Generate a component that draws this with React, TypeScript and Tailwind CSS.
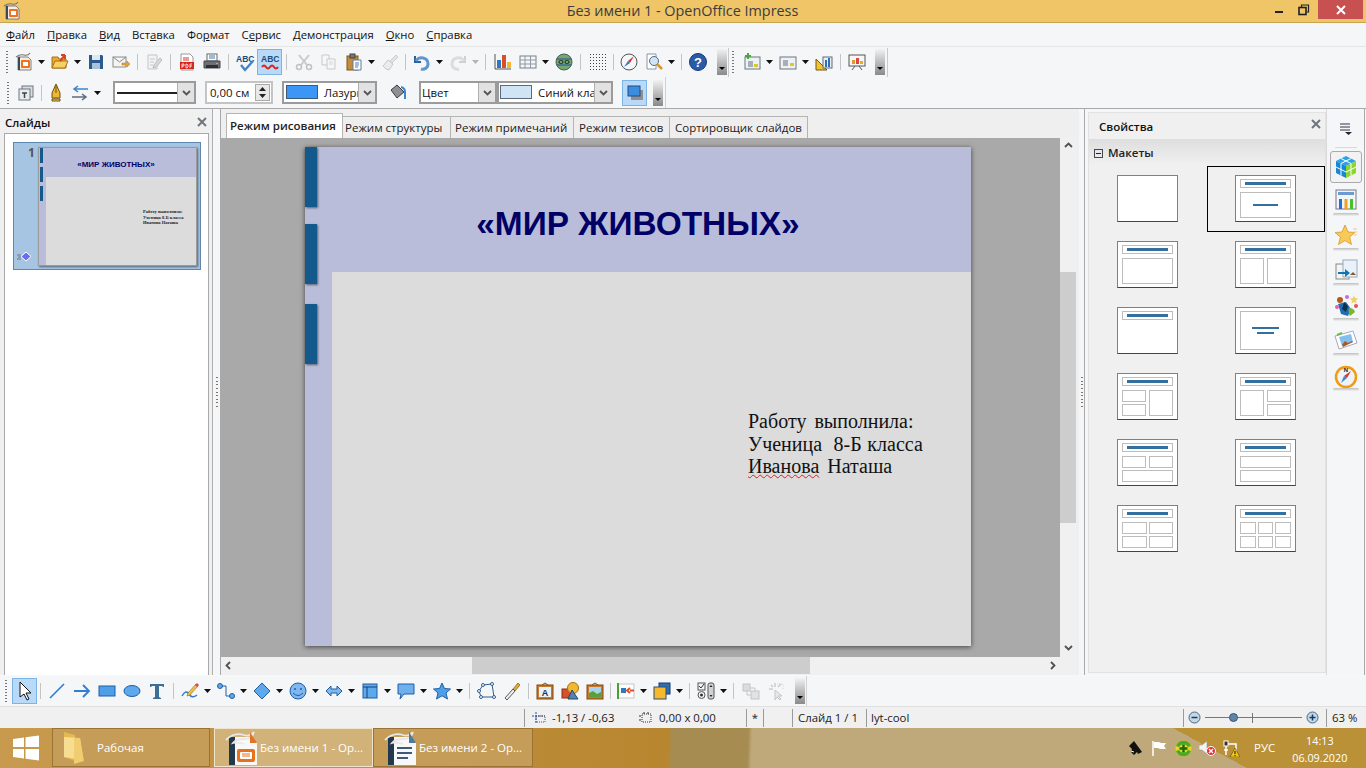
import React from "react";

const UI = "font-['Open_Sans','Noto_Sans',sans-serif]";

type P = { children: React.ReactNode; s?: number };
const V = ({ children, s = 20 }: P) => (
  <svg width={s} height={s} viewBox="0 0 20 20" className="block shrink-0">{children}</svg>
);

const Dd = () => (
  <div className="w-[11px] flex justify-center"><svg width="7" height="4" viewBox="0 0 7 4" className="block"><path d="M0 0h7L3.5 4z" fill="#111" /></svg></div>
);
const DdG = () => (
  <div className="w-[11px] flex justify-center"><svg width="7" height="4" viewBox="0 0 7 4" className="block"><path d="M0 0h7L3.5 4z" fill="#b5b5b5" /></svg></div>
);
const Sep = ({ w = "w-[8px]", h = "h-[16px]" }: { w?: string; h?: string }) => (
  <div className={`${w} flex justify-center`}><div className={`w-px ${h} bg-[#c4c4c4]`} /></div>
);
const Cell = ({ children, active }: { children: React.ReactNode; active?: boolean }) => (
  <div className={`w-[25px] h-[26px] flex items-center justify-center ${active ? "bg-[#b8d9f7] border border-[#7db4e6]" : ""}`}>{children}</div>
);
const Handle = ({ className = "" }: { className?: string }) => (
  <div className={`w-[2px] h-[22px] flex flex-col justify-between shrink-0 ${className}`}>
    {[0, 1, 2, 3, 4, 5, 6, 7].map((i) => <div key={i} className="w-[2px] h-px bg-[#777]" />)}
  </div>
);
const Overflow = ({ className = "" }: { className?: string }) => (
  <div className={`w-[10px] h-[26px] bg-gradient-to-b from-[#f2f2f2] to-[#8a8a8a] flex items-end justify-center pb-[5px] ${className}`}>
    <svg width="6" height="3" viewBox="0 0 6 3" className="block"><path d="M0 0h6L3 3z" fill="#000" /></svg>
  </div>
);

const IDoc = () => (
  <V><path d="M4 5h10l3 3v10H4z" fill="#f6eee2" stroke="#666" strokeWidth=".8" /><path d="M4 5h2v13H4z" fill="#3a4a58" /><path d="M2 5q4-3 8-2t6-2" fill="none" stroke="#777" strokeWidth="1.200" /><rect x="7" y="8" width="9" height="8" rx="1" fill="#ee7420" /><rect x="9" y="10" width="5" height="4" fill="#fff" /></V>
);
const IOpen = () => (
  <V><path d="M2 5h6l1 2h7v9H2z" fill="#e8a92f" stroke="#a8701a" /><path d="M2 16l3-7h13l-3 7z" fill="#f7d063" stroke="#a8701a" /><path d="M10 9l5-6M15 3h-4M15 3v4" stroke="#d2451e" strokeWidth="2" fill="none" /></V>
);
const ISave = () => (
  <V><path d="M3 3h13l1 1v13H3z" fill="#2c5a8c" /><rect x="6" y="3" width="8" height="5" fill="#dce7f3" /><rect x="6" y="11" width="8" height="6" fill="#a9c2dc" /></V>
);
const IMail = () => (
  <V><rect x="2" y="5" width="13" height="10" fill="#f4f4f4" stroke="#8a8a8a" /><path d="M2 5l6.5 5L15 5" fill="none" stroke="#8a8a8a" /><path d="M11 11h5V9l3 3-3 3v-2h-5z" fill="#f1a92a" stroke="#a8701a" strokeWidth=".5" /></V>
);
const IEdit = () => (
  <V><path d="M4 3h9v14H4z" fill="#f3f3f3" stroke="#c5c5c5" /><path d="M6 7h5M6 10h4M6 13h3" stroke="#c8c8c8" /><path d="M10 13l6-7 2 2-6 7-3 1z" fill="#dadada" stroke="#bbb" /></V>
);
const IPdf = () => (
  <V><path d="M4 2h9l3 3v13H4z" fill="#fff" stroke="#999" /><path d="M6 6h6M6 8h6" stroke="#d33" /><rect x="3" y="10" width="14" height="7" fill="#d8261c" /><path d="M5 12v4M5 12h2v2H5M9 12v4h1l1-1v-2l-1-1zM13 16v-4h2M13 14h2" stroke="#fff" strokeWidth=".8" fill="none" /></V>
);
const IPrint = () => (
  <V><rect x="5" y="2" width="10" height="7" fill="#fff" stroke="#666" /><path d="M7 4h6M7 6h6" stroke="#3b78b8" /><path d="M2 9h16v7H2z" fill="#6d7175" stroke="#44474a" /><rect x="4" y="13" width="12" height="3" fill="#2d3033" /><rect x="14" y="11" width="2" height="1" fill="#7fd24a" /></V>
);
const IAbcOk = () => (
  <V><text x="1" y="10" fontSize="8.5" fontWeight="700" fill="#1d4d7d" fontFamily="'Liberation Sans',sans-serif">ABC</text><path d="M6 13l4 5 8-9" stroke="#3f85cc" strokeWidth="2.4" fill="none" /></V>
);
const IAbcW = () => (
  <V><text x="1" y="10" fontSize="8.5" fontWeight="700" fill="#1d4d7d" fontFamily="'Liberation Sans',sans-serif">ABC</text><path d="M2 15q2-3 4 0t4 0 4 0 4 0" stroke="#d9231c" strokeWidth="2" fill="none" /></V>
);
const ICut = () => (
  <V><path d="M5 3l8 10M15 3L7 13" stroke="#c9c9c9" strokeWidth="2" /><circle cx="5" cy="15" r="2.5" fill="none" stroke="#c2c2c2" strokeWidth="1.5" /><circle cx="15" cy="15" r="2.5" fill="none" stroke="#c2c2c2" strokeWidth="1.5" /></V>
);
const ICopy = () => (
  <V><path d="M3 3h7v10H3z" fill="#f6f6f6" stroke="#c9c9c9" /><path d="M8 7h8v10H8z" fill="#f6f6f6" stroke="#c9c9c9" /><path d="M10 10h4M10 12h4" stroke="#d6d6d6" /></V>
);
const IPaste = () => (
  <V><rect x="3" y="4" width="11" height="14" fill="#c58c3c" stroke="#7b561f" /><rect x="6" y="2" width="5" height="4" fill="#777" stroke="#444" /><path d="M9 8h8v10H9z" fill="#fff" stroke="#5c7fa8" /><path d="M11 11h4M11 13h4M11 15h3" stroke="#4a7db0" /></V>
);
const IBrush = () => (
  <V><path d="M10 9l6-6 2 2-6 6z" fill="#e2e2e2" stroke="#cfcfcf" /><path d="M3 14l5-6 5 4-4 6q-3 0-6-4z" fill="#ececec" stroke="#c9c9c9" /></V>
);
const IUndo = () => (
  <V><path d="M3 4v6h6" fill="none" stroke="#2f5f92" strokeWidth="2" /><path d="M4 9c3-5 12-4 12 3 0 4-4 6-7 5" fill="none" stroke="#5d97d0" strokeWidth="3" /></V>
);
const IRedo = () => (
  <V><path d="M17 4v6h-6" fill="none" stroke="#d0d0d0" strokeWidth="2" /><path d="M16 9C13 4 4 5 4 12c0 4 4 6 7 5" fill="none" stroke="#dcdcdc" strokeWidth="3" /></V>
);
const IChart = () => (
  <V><path d="M2 2v15h16" fill="none" stroke="#555" /><rect x="4" y="8" width="4" height="8" fill="#2f77c0" /><rect x="9" y="3" width="4" height="13" fill="#d8502a" /><rect x="14" y="10" width="4" height="6" fill="#f2b92f" /></V>
);
const ITable = () => (
  <V><rect x="2" y="4" width="16" height="12" fill="#f4f6f8" stroke="#77808a" /><path d="M2 8h16M2 12h16M7 4v12M12.500 4v12" stroke="#8f99a3" /></V>
);
const IGlobe = () => (
  <V><circle cx="10" cy="10" r="8" fill="#71a86b" stroke="#4b5c55" /><path d="M3 7h14M3 13h14" stroke="#3f6a9a" strokeWidth="1.5" /><rect x="5" y="8.500" width="4" height="3" rx="1.500" fill="none" stroke="#222" /><rect x="11" y="8.500" width="4" height="3" rx="1.500" fill="none" stroke="#222" /></V>
);
const IGrid = () => (
  <V>{[3, 6, 9, 12, 15, 18].map((y) => [2, 5, 8, 11, 14, 17].map((x) => <rect key={`${x}-${y}`} x={x} y={y - 1} width="1" height="1" fill="#444" />))}</V>
);
const INav = () => (
  <V><circle cx="10" cy="10" r="8" fill="#f4f6f8" stroke="#555" /><path d="M15 4l-4 7-2-2z" fill="#d33" /><path d="M5 15l4-6 2 2z" fill="#2f77c0" /></V>
);
const IFind = () => (
  <V><path d="M3 2h9v15H3z" fill="#fff" stroke="#8a96a3" /><circle cx="10" cy="9" r="4.500" fill="#cfe4f7" stroke="#58697c" /><path d="M13 12l5 5" stroke="#d8972b" strokeWidth="2.500" /></V>
);
const IHelp = () => (
  <V><circle cx="10" cy="10" r="8.500" fill="#2a5ba8" stroke="#173a75" /><text x="10" y="15" fontSize="13" fontWeight="700" textAnchor="middle" fill="#fff" fontFamily="'Liberation Sans',sans-serif">?</text></V>
);
const INewSl = () => (
  <V><rect x="3" y="5" width="15" height="12" fill="#eef1f4" stroke="#6d767f" /><path d="M6 10h5M6 12h5M6 14h5" stroke="#5d6d7e" /><rect x="12" y="12" width="4" height="3" fill="#d8c92f" /><path d="M6 1v6M3 4h6" stroke="#48a83a" strokeWidth="2" /></V>
);
const ILay = () => (
  <V><rect x="2" y="5" width="16" height="12" fill="#eef1f4" stroke="#6d767f" /><path d="M5 9h5M5 11h5M5 13h5" stroke="#5d6d7e" /><rect x="12" y="11" width="4" height="3" fill="#d8c92f" /></V>
);
const IGeo = () => (
  <V><path d="M2 18V7l11 11z" fill="#f5c32e" stroke="#77551a" /><rect x="9" y="5" width="9" height="11" fill="#e9eef3" stroke="#5d6d7e" /><rect x="11" y="8" width="2" height="7" fill="#2f6fb0" /><rect x="14" y="6" width="2" height="9" fill="#2f6fb0" /></V>
);
const IShow = () => (
  <V><rect x="2" y="3" width="16" height="11" fill="#f7f7f7" stroke="#555" /><rect x="5" y="8" width="3" height="4" fill="#d93" /><rect x="9" y="6" width="3" height="6" fill="#d44" /><rect x="13" y="9" width="3" height="3" fill="#e8a92f" /><path d="M5 18l3-4M15 18l-3-4" stroke="#555" /></V>
);
const IMaster = () => (
  <V><rect x="6" y="3" width="11" height="11" fill="#d9dde1" stroke="#6d767f" /><rect x="3" y="6" width="11" height="11" fill="#e9ecef" stroke="#6d767f" /><path d="M6 10h5M8.500 10v5" stroke="#444" strokeWidth="1.500" /></V>
);
const IPen = () => (
  <V><path d="M10 1l4 9v5H6v-5z" fill="#efb92e" stroke="#6d4f12" /><path d="M10 3v7" stroke="#6d4f12" /><path d="M6 16h8v2H6z" fill="#f1d273" stroke="#6d4f12" /></V>
);
const ISwap = () => (
  <V><path d="M18 6H5M8 3L4 6l4 3" fill="none" stroke="#3a86cf" strokeWidth="1.500" /><path d="M2 14h13M12 11l4 3-4 3" fill="none" stroke="#5d6d7e" strokeWidth="1.500" /></V>
);
const IBucket = () => (
  <V><path d="M3 7l6-5 7 7-7 6z" fill="#8d9196" stroke="#3a3d40" /><path d="M13 3q5 1 5 6v7h-2V9q0-3-3-4z" fill="#3f85cc" /></V>
);
const IShadow = () => (
  <V><rect x="6" y="7" width="12" height="10" fill="#8f8f8f" /><rect x="3" y="3" width="12" height="10" fill="#3b8de0" stroke="#1d4d86" /></V>
);
const ICursor = () => (
  <svg width="14" height="20" viewBox="0 0 14 20" className="block"><path d="M2 1v15l4-3 3 6 2-1-3-6h5z" fill="#fff" stroke="#111" /></svg>
);
const B = "#2f7ed0";
const ILine = () => <V><path d="M3 17L17 3" stroke={B} strokeWidth="1.600" /></V>;
const IArrow = () => <V><path d="M2 10h15M11 4l6 6-6 6" fill="none" stroke={B} strokeWidth="1.800" /></V>;
const IRect = () => <V><rect x="2" y="5" width="16" height="10" fill="#4f9ee8" stroke="#1f5fa8" /></V>;
const IEll = () => <V><ellipse cx="10" cy="10" rx="8" ry="5.500" fill="#5ea8ec" stroke="#1f5fa8" /></V>;
const IT = () => (
  <V><path d="M3 6V3h14v3h-1l-1-1h-3v11l2 1v1H6v-1l2-1V5H5L4 6z" fill="#3d6f96" /></V>
);
const IFree = () => (
  <V><path d="M2 15q4-7 7-2t8 1" fill="none" stroke={B} strokeWidth="1.500" /><path d="M8 12l8-9 2 2-8 9-3 1z" fill="#efc04a" stroke="#8a6a1e" strokeWidth=".6" /><path d="M15 4l2-2 2 2-2 2z" fill="#e0445a" /></V>
);
const IConn = () => (
  <V><circle cx="4" cy="5" r="2.500" fill="#5ea8ec" stroke="#1f5fa8" /><circle cx="16" cy="15" r="2.500" fill="#5ea8ec" stroke="#1f5fa8" /><path d="M6 5h4v10h4" fill="none" stroke="#1f5fa8" /></V>
);
const IDia = () => <V><path d="M10 2l8 8-8 8-8-8z" fill="#5ea8ec" stroke="#1f5fa8" /></V>;
const ISmile = () => (
  <V><circle cx="10" cy="10" r="8" fill="#7fb8f0" stroke="#1f5fa8" /><circle cx="7" cy="8" r="1" fill="#1f5fa8" /><circle cx="13" cy="8" r="1" fill="#1f5fa8" /><path d="M5 12q5 5 10 0" fill="none" stroke="#1f5fa8" /></V>
);
const IBiar = () => <V><path d="M2 10l5-5v3h6V5l5 5-5 5v-3H7v3z" fill="#7fb8f0" stroke="#1f5fa8" /></V>;
const IFlow = () => (
  <V><rect x="3" y="3" width="14" height="14" fill="#5ea8ec" stroke="#1f5fa8" /><path d="M3 6h14M7 6v11" stroke="#123f78" /></V>
);
const ICall = () => <V><path d="M2 3h16v10H8l-4 5 1-5H2z" fill="#6eb0ee" stroke="#1f5fa8" /></V>;
const IStar = () => <V><path d="M10 2l2.500 5.500 6 .5-4.500 4 1.500 6-5.500-3.200L4.500 18 6 12 1.500 8l6-.5z" fill="#4f9ee8" stroke="#1f5fa8" /></V>;
const IPts = () => (
  <V><path d="M6 4l9-1 2 13-13 0-2-6z" fill="none" stroke="#2d5f8f" /><circle cx="6" cy="4" r="1.500" fill="#fff" stroke="#2d5f8f" /><circle cx="15" cy="3" r="1.500" fill="#fff" stroke="#2d5f8f" /><circle cx="17" cy="16" r="1.500" fill="#fff" stroke="#2d5f8f" /><circle cx="4" cy="16" r="1.500" fill="#fff" stroke="#2d5f8f" /><circle cx="2" cy="10" r="1.500" fill="#fff" stroke="#2d5f8f" /></V>
);
const IGlue = () => (
  <V><path d="M11 8l5-6 2 2-5 6z" fill="#e8a92f" stroke="#7b561f" strokeWidth=".7" /><path d="M3 17l8-9 2 2-8 9z" fill="#eee" stroke="#333" strokeWidth=".8" /></V>
);
const Fr = ({ children }: { children: React.ReactNode }) => (
  <V><path d="M7 4l3-2 3 2" fill="none" stroke="#7b561f" /><rect x="2" y="4" width="16" height="14" fill="#c87a2a" stroke="#7b4a14" />{children}</V>
);
const IFrA = () => (
  <Fr><rect x="4" y="6" width="12" height="10" fill="#eaf1f8" /><text x="10" y="15" fontSize="9" fontWeight="700" textAnchor="middle" fill="#234" fontFamily="'Liberation Sans',sans-serif">A</text></Fr>
);
const IShapes = () => (
  <V><rect x="2" y="8" width="9" height="9" fill="#d8502a" stroke="#8a2f14" /><circle cx="13" cy="7" r="5.500" fill="#f2b92f" stroke="#a8701a" /><path d="M12 9l6 9h-10z" fill="#4f84b8" stroke="#23466e" /></V>
);
const IImg = () => (
  <Fr><rect x="4" y="6" width="12" height="10" fill="#a8d3ef" /><path d="M4 16v-4l4-2 4 3 4-2v5z" fill="#5aa03a" /></Fr>
);
const IAlign = () => (
  <V><rect x="2" y="3" width="16" height="14" fill="#fff" stroke="#c5c5c5" /><path d="M2 2v16" stroke="#4aa02c" strokeWidth="2" /><rect x="5" y="7" width="5" height="5" fill="#2f77c0" /><path d="M18 9.500h-4M14 7l-3 2.500 3 2.500" stroke="#d8502a" strokeWidth="2" fill="none" /></V>
);
const IArr = () => (
  <V><rect x="7" y="2" width="11" height="11" fill="#2f6fb0" stroke="#173a75" /><rect x="2" y="6" width="12" height="12" fill="#f7b92c" stroke="#2f4d75" /></V>
);
const IForm = () => (
  <V><rect x="2" y="2" width="7" height="7" fill="#f4f4f4" stroke="#555" /><path d="M3 5l2 2 3-4" stroke="#333" fill="none" /><circle cx="5.500" cy="14" r="3.500" fill="#f4f4f4" stroke="#555" /><circle cx="5.500" cy="14" r="1.500" fill="#333" /><rect x="12" y="2" width="6" height="16" rx="2" fill="#cfd3d6" stroke="#555" /><path d="M15 4l-1.500 2h3zM15 16l-1.500-2h3z" fill="#222" /></V>
);
const IGray1 = () => (
  <V><rect x="2" y="3" width="7" height="7" fill="#dcdcdc" stroke="#c4c4c4" /><path d="M9 7h5v4M6 10v4h4" stroke="#c4c4c4" fill="none" /><rect x="10" y="10" width="8" height="8" fill="#e2e2e2" stroke="#c4c4c4" /></V>
);
const IGray2 = () => (
  <V><path d="M9 9v10l2-3 3 3 1-1-3-3h4z" fill="#e8e8e8" stroke="#c6c6c6" /><path d="M9 2v4M3 8h4M5 4l2 2M15 3l-3 3" stroke="#cbcbcb" strokeWidth="1.500" /><path d="M11 3h6v6" stroke="#d5d5d5" strokeDasharray="1 1" fill="none" /></V>
);

const Select = ({ w, children }: { w: string; children: React.ReactNode }) => (
  <div className={`${w} h-[23px] border-2 border-[#9b9b9b] bg-white flex items-center overflow-hidden`}>
    <div className="flex-1 min-w-0 flex items-center overflow-hidden whitespace-nowrap">{children}</div>
    <div className="w-[17px] h-full bg-[#e2e2e2] border-l border-[#b0b0b0] flex items-center justify-center shrink-0">
      <svg width="9" height="6" viewBox="0 0 9 6" className="block"><path d="M1 1l3.500 3.500L8 1" fill="none" stroke="#555" strokeWidth="1.800" /></svg>
    </div>
  </div>
);

const X = ({ c = "#6f767d" }: { c?: string }) => (
  <svg width="10" height="10" viewBox="0 0 10 10" className="block"><path d="M1 1l8 8M9 1l-8 8" stroke={c} strokeWidth="2" /></svg>
);

const Chev = ({ d }: { d: string }) => (
  <svg width="9" height="9" viewBox="0 0 9 9" className="block"><path d={d} fill="none" stroke="#505050" strokeWidth="1.800" /></svg>
);

const Menu = () => (
  <div className={`h-[23px] bg-[#f5f6f7] flex items-center pl-[6px] gap-[12px] text-[11.3px] leading-none text-[#111] ${UI}`}>
    <span><u>Ф</u>айл</span>
    <span><u>П</u>равка</span>
    <span><u>В</u>ид</span>
    <span>Вст<u>а</u>вка</span>
    <span>Фо<u>р</u>мат</span>
    <span>С<u>е</u>рвис</span>
    <span><u>Д</u>емонстрация</span>
    <span><u>О</u>кно</span>
    <span><u>С</u>правка</span>
  </div>
);

const Toolbar1 = () => (
  <div className="h-[31px] bg-[#f5f6f7] border-t border-[#e6e6e6] flex items-center">
    <div className="w-[11px] flex justify-center pl-[2px]"><Handle /></div>
    <Cell><IDoc /></Cell><Dd /><Cell><IOpen /></Cell><Dd /><Cell><ISave /></Cell><Cell><IMail /></Cell><Sep />
    <Cell><IEdit /></Cell><Sep /><Cell><IPdf /></Cell><Cell><IPrint /></Cell><Sep />
    <Cell><IAbcOk /></Cell><Cell active><IAbcW /></Cell><Sep w="w-[9px]" />
    <Cell><ICut /></Cell><Cell><ICopy /></Cell><Cell><IPaste /></Cell><Dd /><Cell><IBrush /></Cell><Sep w="w-[7px]" />
    <Cell><IUndo /></Cell><Dd /><Cell><IRedo /></Cell><DdG /><Sep w="w-[9px]" />
    <Cell><IChart /></Cell><Cell><ITable /></Cell><Dd /><Cell><IGlobe /></Cell><Sep w="w-[9px]" />
    <Cell><IGrid /></Cell><Sep w="w-[6px]" /><Cell><INav /></Cell><Cell><IFind /></Cell><Dd /><Sep />
    <Cell><IHelp /></Cell>
    <Overflow className="ml-[7px] mr-[1px]" />
    <div className="w-px h-[29px] bg-[#c9c9c9] mr-[3px]" />
    <Handle className="mr-[5px]" />
    <Cell><INewSl /></Cell><Dd /><Cell><ILay /></Cell><Dd /><Cell><IGeo /></Cell><Sep />
    <Cell><IShow /></Cell>
    <Overflow className="ml-[6px]" />
    <div className="w-px h-[29px] bg-[#c9c9c9] ml-[2px]" />
  </div>
);

const Toolbar2 = () => (
  <div className={`h-[31px] bg-[#f5f6f7] flex items-center text-[11.4px] text-[#111] ${UI}`}>
    <div className="w-[13px] flex justify-center pl-[2px]"><Handle /></div>
    <Cell><IMaster /></Cell><Sep w="w-[6px]" />
    <div className="-ml-[1px]"><Cell><IPen /></Cell></div><div className="-ml-[1px]"><Cell><ISwap /></Cell></div><Dd />
    <div className="w-[10px]" />
    <Select w="w-[83px]"><div className="ml-[2px] w-[62px] h-[2px] bg-[#222]" /></Select>
    <div className="w-[9px]" />
    <div className="w-[68px] h-[23px] border-2 border-[#c4c4c4] bg-white flex items-center pl-[3px] justify-between">
      <span>0,00 см</span>
      <div className="w-[15px] h-[17px] bg-[#e8e8e8] border border-[#aaa] mr-px flex flex-col items-center justify-center gap-[3px]">
        <svg width="7" height="4" viewBox="0 0 7 4" className="block"><path d="M0 4h7L3.500 0z" fill="#222" /></svg>
        <svg width="7" height="4" viewBox="0 0 7 4" className="block"><path d="M0 0h7L3.500 4z" fill="#222" /></svg>
      </div>
    </div>
    <div className="w-[9px]" />
    <Select w="w-[95px]"><div className="ml-[2px] w-[32px] h-[14px] bg-[#3b96f5] border border-[#3a5a7a] shrink-0" /><span className="ml-[6px]">Лазурь</span></Select>
    <div className="w-[8px]" />
    <Cell><IBucket /></Cell>
    <div className="w-[9px]" />
    <Select w="w-[78px]"><span className="ml-[1px]">Цвет</span></Select>
    <Select w="w-[116px]"><div className="ml-[1px] w-[32px] h-[14px] bg-[#cfe4f5] border border-[#5a6a7a] shrink-0" /><span className="ml-[6px]">Синий клас</span></Select>
    <div className="w-[9px]" />
    <Cell active><IShadow /></Cell>
    <Overflow className="ml-[6px]" />
    <div className="w-px h-[31px] bg-[#d2d2d2] ml-[2px]" />
  </div>
);

const Tab = ({ w, on, children }: { w: string; on?: boolean; children: React.ReactNode }) => (
  <div className={`${w} flex items-center whitespace-nowrap border border-b-0 border-[#b4b4b4] ${on ? "h-[25px] bg-white font-semibold" : "h-[22px] bg-[#eeeeee] border-l-0"}`}>{children}</div>
);

const SlideThumb = () => (
  <div className="w-[159px] h-[119px] bg-[#b9bdd9] flex border border-[#9a9a9a] shadow-[1px_1px_2px_rgba(0,0,0,0.5)]">
    <div className="w-[7px] flex flex-col gap-[4px] shrink-0 pl-px">
      <div className="w-[3px] h-[15px] bg-[#14598c]" />
      <div className="w-[3px] h-[15px] bg-[#14598c]" />
      <div className="w-[3px] h-[15px] bg-[#14598c]" />
    </div>
    <div className="flex-1 flex flex-col">
      <div className="h-[29px] flex items-center justify-center pr-[10px] pt-[4px] text-[8px] font-bold text-[#000066] font-['Liberation_Sans',sans-serif]">«МИР ЖИВОТНЫХ»</div>
      <div className="flex-1 bg-[#dcdcdc] pl-[97px] pt-[32px] text-[4.500px] leading-[5.500px] font-bold text-[#222] font-['Liberation_Serif',serif] whitespace-nowrap">
        <div>Работу выполнила:</div>
        <div>Ученица  8-Б класса</div>
        <div>Иванова Наташа</div>
      </div>
    </div>
  </div>
);

const LeftPanel = () => (
  <div className={`w-[213px] shrink-0 h-full bg-[#f0f0f0] flex flex-col border-r border-[#b0b0b0] ${UI}`}>
    <div className="h-[24px] flex items-center justify-between pl-[5px] pr-[5px] pt-[2px] shrink-0">
      <span className="text-[11.500px] font-semibold text-[#111] mt-px">Слайды</span>
      <X />
    </div>
    <div className="flex-1 ml-[4px] mr-[3px] bg-white border-t border-x border-[#a9a9a9] pt-[8px] pl-[8px]">
      <div className="w-[188px] h-[128px] bg-[#a6c5e3] border border-[#5f87ae] flex pl-[24px] pt-[4px] relative">
        <SlideThumb />
        <span className="absolute left-[14px] top-[1px] text-[12px] font-bold text-[#555]">1</span>
        <svg width="15" height="11" viewBox="0 0 15 11" className="absolute left-[3px] bottom-[7px]"><path d="M9 1l5 4.500L9 10 4 5.500z" fill="#6c6cf0" stroke="#fff" /><path d="M0 4h4M1 6h3M0 8h4" stroke="#777" /></svg>
      </div>
    </div>
  </div>
);

const Grip = () => (
  <div className="w-[3px] h-[30px] flex flex-col justify-between items-center">
    {[0, 1, 2, 3, 4, 5, 6, 7, 8].map((i) => <div key={i} className="w-[2px] h-px bg-[#777]" />)}
  </div>
);

const Center = () => (
  <div className="w-[859px] shrink-0 h-full bg-[#efefef] flex flex-col border-l border-[#a9a9a9] pb-px">
    <div className={`h-[29px] pt-[4px] pl-[5px] flex items-end text-[11.500px] text-[#222] shrink-0 ${UI}`}>
      <Tab w="w-[117px] pl-[3px]" on>Режим рисования</Tab>
      <Tab w="w-[108px] pl-[2px]">Режим структуры</Tab>
      <Tab w="w-[123px] pl-[4px]">Режим примечаний</Tab>
      <Tab w="w-[96px] pl-[5px]">Режим тезисов</Tab>
      <Tab w="w-[138px] pl-[5px]">Сортировщик слайдов</Tab>
    </div>
    <div className="flex-1 flex min-h-0">
      <div className="w-[839px] flex flex-col">
        <div className="flex-1 min-h-0 bg-[#a9a9a9] pl-[84px] pt-[9px]">
          <div className="w-[666px] h-[499px] bg-[#b9bdd9] flex shadow-[0_1px_5px_rgba(0,0,0,0.6)]">
            <div className="w-[27px] shrink-0 flex flex-col gap-[17px]">
              <div className="w-[12px] h-[60px] bg-[#14598c] shadow-[1px_1px_2px_rgba(0,0,0,0.5)]" />
              <div className="w-[12px] h-[60px] bg-[#14598c] shadow-[1px_1px_2px_rgba(0,0,0,0.5)]" />
              <div className="w-[12px] h-[60px] mt-[3px] bg-[#14598c] shadow-[1px_1px_2px_rgba(0,0,0,0.5)]" />
            </div>
            <div className="flex-1 flex flex-col">
              <div className="h-[125px] shrink-0 flex items-center justify-center pt-[30px] pr-[27px] text-[33.400px] font-bold text-[#000066] font-['Liberation_Sans',sans-serif]">«МИР ЖИВОТНЫХ»</div>
              <div className="flex-1 bg-[#dcdcdc] pl-[416px] pt-[138px] text-[20px] leading-[22.500px] text-[#111] font-['Liberation_Serif',serif] whitespace-pre">
                <div className="[word-spacing:3px]">Работу выполнила:</div>
                <div className="[word-spacing:0.700px]">Ученица  8-Б класса</div>
                <div className="[word-spacing:3px]"><span className="underline decoration-wavy decoration-[#e02020] decoration-1">Иванова</span> Наташа</div>
              </div>
            </div>
          </div>
        </div>
        <div className="h-[17px] shrink-0 bg-[#f0f0f0] flex items-center pl-[3px] pr-[3px] justify-between">
          <Chev d="M6 1L2.500 4.500 6 8" />
          <div className="flex-1 h-full relative mx-[3px]"><div className="absolute left-[236px] top-0 w-[338px] h-full bg-[#cdcdcd]" /></div>
          <Chev d="M3 1l3.500 3.500L3 8" />
        </div>
      </div>
      <div className="w-[16px] shrink-0 bg-[#f0f0f0] flex flex-col items-center pt-[3px] pb-[22px] justify-between relative">
        <Chev d="M1 6l3.500-3.500L8 6" />
        <div className="absolute left-0 top-[134px] w-[16px] h-[251px] bg-[#cdcdcd]" />
        <Chev d="M1 3l3.500 3.500L8 3" />
      </div>
      <div className="w-[3px] shrink-0" />
    </div>
  </div>
);

const T = ({ children }: { children?: React.ReactNode }) => (
  <div className="border border-[#bdbdbd] flex items-center justify-center">{children}</div>
);
const Thumb = ({ cls, children }: { cls: string; children?: React.ReactNode }) => (
  <div className={`w-[61px] h-[47px] bg-white border border-[#808080] border-b-[#444] py-[3px] px-[4px] grid ${cls}`}>{children}</div>
);
const Bar = ({ w = "w-[41px]", h = "h-[3px]" }: { w?: string; h?: string }) => <div className={`${w} ${h} bg-[#336f9f]`} />;
const Ttl = () => <T><Bar /></T>;
const HD = "grid-rows-[9px_1fr] gap-[4px]";

const layouts: React.ReactNode[] = [
  <Thumb cls="grid-rows-1"><div /></Thumb>,
  <Thumb cls={HD}><Ttl /><T><Bar w="w-[25px]" h="h-[2px]" /></T></Thumb>,
  <Thumb cls={HD}><Ttl /><T /></Thumb>,
  <Thumb cls={HD}><Ttl /><div className="grid grid-cols-2 gap-[3px]"><T /><T /></div></Thumb>,
  <Thumb cls={HD}><Ttl /><div /></Thumb>,
  <Thumb cls="grid-rows-1"><T><div className="flex flex-col items-center gap-[3px]"><Bar w="w-[27px]" h="h-[2px]" /><Bar w="w-[17px]" h="h-[2px]" /></div></T></Thumb>,
  <Thumb cls={HD}><Ttl /><div className="grid grid-cols-2 gap-[3px]"><div className="grid grid-rows-2 gap-[2px]"><T /><T /></div><T /></div></Thumb>,
  <Thumb cls={HD}><Ttl /><div className="grid grid-cols-2 gap-[3px]"><T /><div className="grid grid-rows-2 gap-[2px]"><T /><T /></div></div></Thumb>,
  <Thumb cls={HD}><Ttl /><div className="grid grid-rows-2 gap-[2px]"><div className="grid grid-cols-2 gap-[3px]"><T /><T /></div><T /></div></Thumb>,
  <Thumb cls={HD}><Ttl /><div className="grid grid-rows-2 gap-[2px]"><T /><T /></div></Thumb>,
  <Thumb cls={HD}><Ttl /><div className="grid grid-cols-2 grid-rows-2 gap-[2px]"><T /><T /><T /><T /></div></Thumb>,
  <Thumb cls={HD}><Ttl /><div className="grid grid-cols-3 grid-rows-2 gap-[2px]"><T /><T /><T /><T /><T /><T /></div></Thumb>,
];

const DeckIcon = ({ children }: { children: React.ReactNode }) => (
  <div className="flex flex-col items-center">
    {children}
    <div className="w-[26px] h-[3px] bg-gradient-to-b from-[#bdbdbd] to-[#f2f2f2] rounded-full" />
  </div>
);

const Right = () => (
  <div className={`flex-1 h-full bg-[#f5f6f7] flex border-l border-[#a9a9a9] ${UI}`}>
    <div className="w-[238px] shrink-0 ml-[3px] mt-[3px] mb-[2px] bg-[#f0f0f0] border border-[#e2e2e2] flex flex-col">
      <div className="h-[26px] shrink-0 flex items-center justify-between pl-[10px] pr-[4px] text-[11.500px] font-semibold text-[#111]">
        <span className="mt-[2px]">Свойства</span><div className="-mt-[4px]"><X /></div>
      </div>
      <div className="h-[26px] shrink-0 bg-gradient-to-b from-[#dedede] to-[#f0f0f0] flex items-center pl-[5px] pt-[2px] gap-[5px] text-[11.500px] font-semibold text-[#222]">
        <div className="w-[9px] h-[9px] border border-[#445] flex items-center justify-center"><div className="w-[5px] h-px bg-[#223]" /></div>
        <span>Макеты</span>
      </div>
      <div className="grid grid-cols-[118px_118px] auto-rows-[66px] pt-px">
        {layouts.map((l, i) => (
          <div key={i} className={`flex items-center justify-center pr-px pb-px ${i === 1 ? "border border-black" : ""}`}>{l}</div>
        ))}
      </div>
    </div>
    <div className="w-px bg-[#d9d9d9] shrink-0" />
    <div className="w-[37px] shrink-0 flex flex-col items-center pt-[14px]">
      <svg width="14" height="12" viewBox="0 0 14 12" className="block"><path d="M1 1h10M1 4h10M1 7h10" stroke="#334" strokeWidth="1.200" /><path d="M6 9h7l-3.500 3z" fill="#223" /></svg>
      <div className="w-[22px] h-px bg-[#d9d9d9] mt-[12px] mb-[3px]" />
      <div className="w-[32px] h-[32px] border border-[#aaa] rounded-[3px] bg-[#f2f2f2] flex items-center justify-center">
        <svg width="22" height="24" viewBox="0 0 22 24" className="block"><path d="M1 6l10-5 10 5-10 5z" fill="#2aa3e8" /><path d="M1 6l10 5v12L1 18z" fill="#1687d2" /><path d="M11 11l10-5v12l-10 5z" fill="#8cd72f" /><path d="M1 12l10 5 10-5M6 3.500l10 5M16 3.500l-10 5M6 8.500v12M16 8.500v12" stroke="#fff" fill="none" /></svg>
      </div>
      <div className="flex flex-col items-center gap-[8px] mt-[6px]">
        <DeckIcon><svg width="24" height="24" viewBox="0 0 24 24" className="block"><rect x="2" y="1" width="20" height="19" fill="#f2f5f8" stroke="#778" /><rect x="4" y="3" width="16" height="3" fill="#6a9ad0" /><rect x="5" y="10" width="3" height="10" fill="#1f6fe0" /><rect x="10.500" y="10" width="3" height="10" fill="#f2a01f" /><rect x="16" y="10" width="3" height="10" fill="#48c02a" /></svg></DeckIcon>
        <DeckIcon><svg width="24" height="24" viewBox="0 0 24 24" className="block"><path d="M11 1l3 7 7 .5-5.500 4.500 2 7.500-6.500-4-6.500 4 2-7.500L1 8.500 8 8z" fill="#f6cb57" stroke="#e3a33a" /><path d="M19 5h4M20 8h3M20 11h3" stroke="#f0c98a" /></svg></DeckIcon>
        <DeckIcon><svg width="24" height="24" viewBox="0 0 24 24" className="block"><rect x="2" y="5" width="13" height="15" fill="#f4f4f4" stroke="#888" /><rect x="9" y="1" width="14" height="17" fill="#e9f2fb" stroke="#9ab" /><path d="M4 13h7V10l5 4-5 4v-3H4z" fill="#0f75b5" /><path d="M16 16l3-3 3 3z" fill="#8a5a2a" /></svg></DeckIcon>
        <DeckIcon><svg width="24" height="24" viewBox="0 0 24 24" className="block"><path d="M4 10l8-2 5 7-3 7-7-2z" fill="#1f6fb5" /><path d="M10 8l4 4-2 6-4-3z" fill="#10304f" /><path d="M15 14q5 0 6 4l-5 4q-2-3-1-8z" fill="#7ab72a" /><circle cx="6" cy="6" r="3" fill="#b05a1f" /><circle cx="13" cy="3" r="2" fill="#c86ae0" /><path d="M20 1l1 3 3 .5-2 2 .5 3-2.500-1.500L17.500 9.500 18 6.500l-2-2 3-.5z" fill="#f0d060" /><circle cx="3" cy="13" r="2" fill="#ea5fa8" /><circle cx="22" cy="12" r="2" fill="#e8505a" /></svg></DeckIcon>
        <DeckIcon><svg width="24" height="24" viewBox="0 0 24 22" className="block"><path d="M1 6l18-5 4 12-18 6z" fill="#fff" stroke="#aab" /><path d="M5 7l12-3 2 8-11 4z" fill="#7fc0ee" /><path d="M8 15l3-4 3 2 4-2 1 1-10 5z" fill="#a55a2a" /><path d="M3 5l5-2" stroke="#6ac04a" strokeWidth="2" /></svg></DeckIcon>
        <DeckIcon><svg width="24" height="24" viewBox="0 0 24 24" className="block"><circle cx="12" cy="13" r="10" fill="#eef3f8" stroke="#f29a12" strokeWidth="2.500" /><path d="M17 7l-4 7-3-2z" fill="#d33" /><path d="M7 19l3-7 3 2z" fill="#3f85cc" /><text x="12" y="8" fontSize="6" fontWeight="700" textAnchor="middle" fill="#222" fontFamily="'Liberation Sans',sans-serif">N</text></svg></DeckIcon>
      </div>
    </div>
    <div className="w-px bg-[#a9a9a9] shrink-0" />
  </div>
);

const Bottom = () => (
  <div className="h-[31px] shrink-0 bg-[#f5f6f7] border-t border-[#f8f8f8] flex items-center">
    <div className="w-[12px] flex justify-center"><Handle /></div>
    <Cell active><ICursor /></Cell>
    <Sep w="w-[7px]" />
    <Cell><ILine /></Cell><Cell><IArrow /></Cell><Cell><IRect /></Cell><Cell><IEll /></Cell><Cell><IT /></Cell><Sep />
    <Cell><IFree /></Cell><Dd /><Cell><IConn /></Cell><Dd /><Cell><IDia /></Cell><Dd /><Cell><ISmile /></Cell><Dd />
    <Cell><IBiar /></Cell><Dd /><Cell><IFlow /></Cell><Dd /><Cell><ICall /></Cell><Dd /><Cell><IStar /></Cell><Dd /><Sep w="w-[9px]" />
    <Cell><IPts /></Cell><Cell><IGlue /></Cell><Sep />
    <Cell><IFrA /></Cell><Cell><IShapes /></Cell><Cell><IImg /></Cell><Sep w="w-[6px]" />
    <Cell><IAlign /></Cell><Dd /><Cell><IArr /></Cell><Dd /><Sep />
    <Cell><IForm /></Cell><Dd /><Sep w="w-[9px]" />
    <Cell><IGray1 /></Cell><Cell><IGray2 /></Cell>
    <Overflow className="ml-[7px]" />
    <div className="w-px h-[31px] bg-[#d2d2d2] ml-[1px]" />
  </div>
);

const SS = ({ w = "", h = "h-[18px]" }: { w?: string; h?: string }) => <div className={`w-px ${h} bg-[#9a9a9a] shrink-0 ${w}`} />;

const Status = () => (
  <div className={`h-[22px] shrink-0 bg-[#f0f0f0] border-t border-[#e0e0e0] flex items-center text-[11.400px] text-[#222] whitespace-nowrap ${UI}`}>
    <SS w="ml-[524px]" />
    <svg width="14" height="12" viewBox="0 0 14 12" className="block ml-[7px] shrink-0"><path d="M0 4h13M4 0v11" stroke="#1f4fc0" strokeDasharray="2 1" /><rect x="4" y="4" width="9" height="6" fill="none" stroke="#555" strokeDasharray="1 1" /></svg>
    <span className="ml-[6px] w-[87px] shrink-0">-1,13 / -0,63</span>
    <svg width="14" height="12" viewBox="0 0 14 12" className="block shrink-0"><rect x="3" y="2" width="9" height="8" fill="none" stroke="#333" strokeDasharray="1 1" /><path d="M0 4h2M0 8h2M5 0v2M9 0v2" stroke="#333" /></svg>
    <span className="ml-[6px] w-[87px] shrink-0">0,00 x 0,00</span>
    <SS />
    <span className="w-[16px] text-center shrink-0">*</span>
    <SS />
    <div className="w-[28px] shrink-0" />
    <SS />
    <span className="ml-[5px] w-[68px] shrink-0">Слайд 1 / 1</span>
    <SS />
    <span className="ml-[4px] w-[312px] shrink-0">lyt-cool</span>
    <SS />
    <svg width="13" height="13" viewBox="0 0 13 13" className="block ml-[4px] shrink-0"><circle cx="6.500" cy="6.500" r="5.500" fill="#c5d6e5" stroke="#45698a" /><path d="M3.500 6.500h6" stroke="#12406b" strokeWidth="1.500" /></svg>
    <div className="ml-[4px] w-[97px] h-[12px] flex items-center relative shrink-0">
      <div className="w-full h-px bg-[#777]" />
      <div className="absolute left-[24px] top-[1px] w-[9px] h-[9px] rounded-full bg-[#5d85a8] border border-[#3a5a78]" />
      <div className="absolute left-[47px] top-[1px] w-px h-[10px] bg-[#777]" />
    </div>
    <svg width="13" height="13" viewBox="0 0 13 13" className="block ml-[4px] shrink-0"><circle cx="6.500" cy="6.500" r="5.500" fill="#c5d6e5" stroke="#45698a" /><path d="M3.500 6.500h6M6.500 3.500v6" stroke="#12406b" strokeWidth="1.500" /></svg>
    <SS w="ml-[7px]" />
    <span className="ml-[5px]">63 %</span>
  </div>
);

const TaskBtn = ({ w, on, children }: { w: string; on?: boolean; children: React.ReactNode }) => (
  <div className={`${w} h-[39px] flex items-center border ${on ? "border-[#f0e4cc] bg-[#d1b279]" : "border-[#9a7434] bg-[#c59c58]"}`}>{children}</div>
);

const OOIcon = ({ kind }: { kind: "imp" | "wr" }) => (
  <svg width="36" height="36" viewBox="0 0 36 36" className="block ml-[9px] shrink-0">
    <path d="M5 7h22l6 6v22H5z" fill="#f8f8f8" />
    <path d="M5 7h6v28H5z" fill="#21384d" />
    <path d="M2 10q8-8 18-5 6 2 10-3-2 7-10 7-8 0-11 4 4-1 11 1" fill="none" stroke="#e8e8e8" strokeWidth="1.800" />
    {kind === "imp" ? (
      <>
        <path d="M26 2l7 11h-7z" fill="#e0752a" />
        <rect x="13" y="19" width="18" height="13" rx="2" fill="#e8711e" />
        <rect x="16" y="22" width="12" height="7" rx="1" fill="#fff" />
        <path d="M18 24h8M18 26h8" stroke="#e8711e" />
      </>
    ) : (
      <>
        <path d="M26 2l7 11h-7z" fill="#4d7aa5" />
        <path d="M14 18h15M14 23h15M14 28h11" stroke="#3d5a78" strokeWidth="2.200" />
      </>
    )}
  </svg>
);

const Taskbar = () => (
  <div className={`h-[40px] shrink-0 flex items-start whitespace-nowrap text-[11.500px] text-white bg-[linear-gradient(28.400deg,transparent_593px,#bb9138_593px),linear-gradient(92deg,#c79a4e_0,#b8862f_668px,#a68c50_672px,#a68c50_748px,#bfa97b_752px,#bfa97b_100%)] ${UI}`}>
    <div className="w-[52px] h-[40px] flex items-center justify-center shrink-0">
      <svg width="28" height="28" viewBox="0 0 28 28" className="block"><path d="M1 5l11-1.500V13H1zM13.500 3.300L27 1.500V13H13.500zM1 15h11v9.500L1 23zM13.500 15H27v11.500l-13.500-1.800z" fill="#fff" /></svg>
    </div>
    <TaskBtn w="w-[158px]">
      <svg width="24" height="34" viewBox="0 0 24 34" className="block ml-[10px] shrink-0"><path d="M1 1l11 3v26L1 26z" fill="#e4b94f" /><path d="M1 6l16 1 3 22-19-3z" fill="#f6dd91" /><path d="M11 7h6l4 23-10 3z" fill="#f1cd6f" /></svg>
      <span className="ml-[10px]">Рабочая</span>
    </TaskBtn>
    <div className="w-[4px]" />
    <TaskBtn w="w-[159px]" on><OOIcon kind="imp" /><span>Без имени 1 - Ор...</span></TaskBtn>
    <TaskBtn w="w-[160px]"><OOIcon kind="wr" /><span>Без имени 2 - Ор...</span></TaskBtn>
    <div className="flex-1 flex items-center h-[40px] pl-[594px]">
      <svg width="16" height="16" viewBox="0 0 16 16" className="block shrink-0"><path d="M2 6l5-5 8 11-4 2-1-2-3 3-3-3 1-3z" fill="#111" /><path d="M4 11l3 1" stroke="#fff" /></svg>
      <svg width="16" height="16" viewBox="0 0 16 16" className="block ml-[8px] shrink-0"><path d="M2 1v15" stroke="#fff" strokeWidth="1.500" /><path d="M3 2h5l2 1h5l-2 3 2 3H9L7 8H3z" fill="#fff" /></svg>
      <svg width="17" height="17" viewBox="0 0 17 17" className="block ml-[8px] shrink-0"><circle cx="8.500" cy="8.500" r="8" fill="#e7d81f" /><path d="M1 6a8 8 0 0 1 15 0l-3 1a5 5 0 0 0-9 0zM16 11a8 8 0 0 1-15 0l3-1a5 5 0 0 0 9 0z" fill="#4aa82a" /><path d="M4.500 8.500h8M8.500 4.500v8" stroke="#1a6a10" strokeWidth="2.400" /></svg>
      <svg width="17" height="16" viewBox="0 0 17 16" className="block ml-[7px] shrink-0"><path d="M0 5h3l5-4v13L3 10H0z" fill="#f4f4f4" stroke="#888" strokeWidth=".5" /><circle cx="12" cy="11" r="4.500" fill="#e0303a" stroke="#fff" /><path d="M10 9l4 4M14 9l-4 4" stroke="#fff" strokeWidth="1.400" /></svg>
      <svg width="17" height="17" viewBox="0 0 17 17" className="block ml-[7px] shrink-0"><path d="M3 4h10v8" fill="none" stroke="#fff" strokeWidth="1.500" /><rect x="1" y="1" width="4" height="5" fill="#333" stroke="#fff" /><path d="M3 6v9M1 10h4" stroke="#fff" strokeWidth="1.500" /><path d="M12 8l5 9H7z" fill="#f2c40f" stroke="#333" strokeWidth=".5" /><path d="M12 11v3M12 15v1" stroke="#111" /></svg>
      <span className="ml-[14px]">РУС</span>
      <div className="ml-[17px] pt-px flex flex-col items-center text-[10.800px]">
        <span className="leading-[17px]">14:13</span>
        <span className="leading-[17px]">06.09.2020</span>
      </div>
    </div>
  </div>
);

export default function App() {
  return (
    <div className="w-[1366px] h-[768px] flex flex-col overflow-hidden bg-[#f5f6f7]">
      <div className={`h-[23px] shrink-0 bg-[#efc567] border-b border-[#c9a44f] flex items-center text-[14.400px] text-[#3c3c3c] ${UI}`}>
        <div className="w-[551px] pl-[2px] flex items-center shrink-0">
          <V><path d="M4 5h10l3 3v10H4z" fill="#f6eee2" stroke="#666" strokeWidth=".8" /><path d="M4 5h2v13H4z" fill="#3a4a58" /><path d="M2 5q4-3 8-2t6-2" fill="none" stroke="#777" strokeWidth="1.200" /><rect x="7" y="8" width="9" height="8" rx="1" fill="#ee7420" /><rect x="9" y="10" width="5" height="4" fill="#fff" /></V>
        </div>
        <span className="w-[263px] text-center whitespace-nowrap">Без имени 1 - OpenOffice Impress</span>
        <div className="flex-1 flex items-start justify-end h-full">
          <svg width="12" height="12" viewBox="0 0 12 12" className="block mt-[2px] mr-[13px]"><rect x="2" y="9" width="8" height="2" fill="#222" /></svg>
          <svg width="12" height="12" viewBox="0 0 12 12" className="block mt-[4px] mr-[8px]"><path d="M3.500 3V1h7v7H8.500" fill="none" stroke="#222" strokeWidth="1.200" /><rect x="1" y="3.500" width="7" height="7" fill="none" stroke="#222" strokeWidth="1.600" /></svg>
          <div className="w-[45px] h-[19px] mr-[3px] bg-[#c75050] flex items-center justify-center"><X c="#ffffff" /></div>
        </div>
      </div>
      <Menu />
      <Toolbar1 />
      <Toolbar2 />
      <div className="h-[567px] shrink-0 flex border-t border-[#a9a9a9] bg-[#f0f0f0]">
        <LeftPanel />
        <div className="w-[7px] shrink-0 flex items-center justify-center bg-[#f5f6f7]"><Grip /></div>
        <Center />
        <div className="w-[5px] shrink-0 flex items-center justify-center bg-[#f5f6f7]"><Grip /></div>
        <Right />
      </div>
      <Bottom />
      <Status />
      <Taskbar />
    </div>
  );
}
